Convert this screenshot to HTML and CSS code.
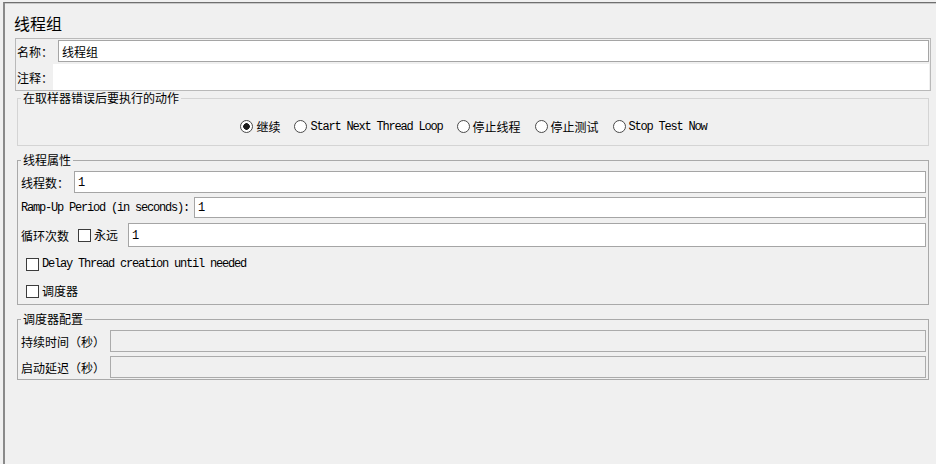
FILE: index.html
```html
<!DOCTYPE html>
<html lang="zh-CN">
<head>
<meta charset="utf-8">
<title>线程组</title>
<link rel="stylesheet" href="styles.css">
</head>
<body>
<div class="window">
  <div class="title">线程组</div>
  <div class="content">
    <div class="name-panel">
      <div class="name-row">
        <span class="lbl lbl-name">名称：</span>
        <div class="input name-input">线程组</div>
      </div>
      <div class="comment-row">
        <span class="lbl lbl-name">注释：</span>
        <div class="comment-area"></div>
      </div>
    </div>

    <fieldset class="group group-error">
      <legend>在取样器错误后要执行的动作</legend>
      <div class="radio-row">
        <div class="radio-item"><span class="radio checked"></span><span>继续</span></div>
        <div class="radio-item"><span class="radio"></span><span class="mono">Start Next Thread Loop</span></div>
        <div class="radio-item"><span class="radio"></span><span>停止线程</span></div>
        <div class="radio-item"><span class="radio"></span><span>停止测试</span></div>
        <div class="radio-item"><span class="radio"></span><span class="mono">Stop Test Now</span></div>
      </div>
    </fieldset>

    <fieldset class="group group-threads">
      <legend>线程属性</legend>
      <div class="row row-threads">
        <span class="lbl">线程数：</span>
        <div class="input field-gap mono">1</div>
      </div>
      <div class="row row-ramp">
        <span class="lbl mono">Ramp-Up Period (in seconds):</span>
        <div class="input field-gap mono">1</div>
      </div>
      <div class="row row-loop">
        <span class="lbl">循环次数</span>
        <span class="checkbox loop-check"></span>
        <span class="check-text forever">永远</span>
        <div class="input loop-input mono">1</div>
      </div>
      <div class="row row-delay">
        <span class="checkbox indent-check"></span>
        <span class="check-text mono">Delay Thread creation until needed</span>
      </div>
      <div class="row row-sched">
        <span class="checkbox indent-check"></span>
        <span class="check-text">调度器</span>
      </div>
    </fieldset>

    <fieldset class="group group-scheduler">
      <legend>调度器配置</legend>
      <div class="row row-sfield">
        <span class="lbl lbl-sched">持续时间（秒）</span>
        <div class="input disabled field-gap"></div>
      </div>
      <div class="row row-sfield row-sfield2">
        <span class="lbl lbl-sched">启动延迟（秒）</span>
        <div class="input disabled field-gap"></div>
      </div>
    </fieldset>
  </div>
</div>
</body>
</html>
```

FILE: styles.css
```css
* {
  box-sizing: border-box;
}

html,
body {
  margin: 0;
  padding: 0;
}

body {
  width: 936px;
  height: 464px;
  overflow: hidden;
  padding: 2px 0 0 3px;
  background: #f0f0f0;
  color: #000;
  font-family: "Noto Sans CJK SC", "Noto Sans", sans-serif;
  font-size: 12px;
  line-height: 14px;
}

.window {
  height: 462px;
  border-top: 1px solid #6f6f6f;
  border-left: 2px solid #8a8a8a;
  box-shadow: inset 0 1px 0 #c8c8c8;
}

.title {
  height: 30px;
  padding: 10px 0 0 9px;
  font-size: 16px;
  line-height: 20px;
}

.content {
  padding: 5px 5px 0 10px;
}

.mono {
  font-family: "Liberation Mono", "DejaVu Sans Mono", monospace;
  font-size: 12px;
  letter-spacing: -1.2px;
}

/* name / comment panel */
.name-panel {
  border: 1px solid #b9b9b9;
  padding: 1px 1px 0 1px;
}

.name-row {
  display: flex;
  align-items: center;
  height: 22px;
}

.lbl {
  flex: none;
  white-space: nowrap;
  padding-top: 1px;
}

.lbl-name {
  width: 36px;
}

.input {
  flex: 1;
  display: flex;
  align-items: center;
  height: 100%;
  padding-left: 3px;
  padding-top: 1px;
  background: #fff;
  border: 1px solid #a5a5a5;
  white-space: nowrap;
}

.name-input {
  margin-left: 5px;
}

.comment-row {
  display: flex;
  align-items: center;
  height: 26px;
  margin-top: 2px;
}

.comment-area {
  flex: 1;
  align-self: stretch;
  background: #fff;
}

/* titled groups */
.group {
  min-width: 0;
  margin: 0 2px;
  padding: 4px 2px 5px 3px;
  border: 1px solid #a9a9a9;
}

.group legend {
  padding: 0 2px;
  margin: 0;
  font-size: 12px;
  line-height: 14px;
}

.group-error {
  padding: 13px 2px 11px 3px;
  border-color: #d4d4d4;
}

.group-threads,
.group-scheduler {
  margin-top: 7px;
}

.group-scheduler {
  padding-bottom: 1px;
}

/* radios */
.radio-row {
  display: flex;
  justify-content: center;
  align-items: center;
  gap: 14px;
  height: 16px;
  padding-top: 1px;
}

.radio-item {
  display: flex;
  align-items: center;
  white-space: nowrap;
}

.radio {
  flex: none;
  width: 13px;
  height: 13px;
  margin-right: 3px;
  border: 1px solid #4a4a4a;
  border-radius: 50%;
  background: #fff;
}

.radio.checked {
  background: radial-gradient(circle, #1e1e1e 0 3px, #fff 3.6px);
}

/* rows */
.row {
  display: flex;
  align-items: center;
}

.row-threads {
  height: 22px;
}

.row-ramp {
  height: 21px;
  margin-top: 4px;
}

.row-loop {
  height: 24px;
  margin-top: 5px;
}

.row-delay {
  height: 16px;
  margin-top: 9px;
}

.row-sched {
  height: 16px;
  margin-top: 11px;
}

.field-gap {
  margin-left: 5px;
}

.checkbox {
  flex: none;
  width: 13px;
  height: 13px;
  border: 1px solid #3c3c3c;
  background: #fff;
}

.loop-check {
  margin-left: 9px;
}

.indent-check {
  margin-left: 5px;
}

.check-text {
  margin-left: 3px;
  white-space: nowrap;
}

.forever {
  margin-left: 3px;
}

.loop-input {
  margin-left: 10px;
}

.row-sfield {
  height: 22px;
}

.row-sfield2 {
  margin-top: 4px;
}

.lbl-sched {
  width: 84px;
}

.input.disabled {
  background: #f0f0f0;
  border-color: #ababab;
}
```
